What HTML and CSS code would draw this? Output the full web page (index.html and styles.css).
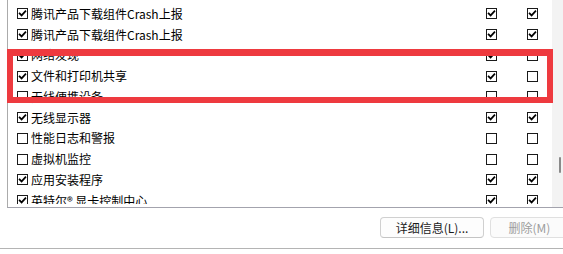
FILE: index.html
```html
<!DOCTYPE html>
<html lang="zh-CN">
<head>
<meta charset="utf-8">
<link rel="stylesheet" href="styles.css">
</head>
<body>
<div class="page">
  <div class="list">
    <div class="rows">
      <div class="row">
        <div class="label"><span class="cb on"><svg viewBox="0 0 9 9"><path d="M1.6 4.4 L3.6 6.4 L7.4 2.2"/></svg></span><span class="txt">腾讯产品下载组件Crash上报</span></div>
        <span class="cb on"><svg viewBox="0 0 9 9"><path d="M1.6 4.4 L3.6 6.4 L7.4 2.2"/></svg></span>
        <span class="cb on"><svg viewBox="0 0 9 9"><path d="M1.6 4.4 L3.6 6.4 L7.4 2.2"/></svg></span>
      </div>
      <div class="row">
        <div class="label"><span class="cb on"><svg viewBox="0 0 9 9"><path d="M1.6 4.4 L3.6 6.4 L7.4 2.2"/></svg></span><span class="txt">腾讯产品下载组件Crash上报</span></div>
        <span class="cb on"><svg viewBox="0 0 9 9"><path d="M1.6 4.4 L3.6 6.4 L7.4 2.2"/></svg></span>
        <span class="cb on"><svg viewBox="0 0 9 9"><path d="M1.6 4.4 L3.6 6.4 L7.4 2.2"/></svg></span>
      </div>
      <div class="row">
        <div class="label"><span class="cb on"><svg viewBox="0 0 9 9"><path d="M1.6 4.4 L3.6 6.4 L7.4 2.2"/></svg></span><span class="txt">网络发现</span></div>
        <span class="cb on"><svg viewBox="0 0 9 9"><path d="M1.6 4.4 L3.6 6.4 L7.4 2.2"/></svg></span>
        <span class="cb"></span>
      </div>
      <div class="row">
        <div class="label"><span class="cb on"><svg viewBox="0 0 9 9"><path d="M1.6 4.4 L3.6 6.4 L7.4 2.2"/></svg></span><span class="txt">文件和打印机共享</span></div>
        <span class="cb on"><svg viewBox="0 0 9 9"><path d="M1.6 4.4 L3.6 6.4 L7.4 2.2"/></svg></span>
        <span class="cb"></span>
      </div>
      <div class="row">
        <div class="label"><span class="cb"></span><span class="txt">无线便携设备</span></div>
        <span class="cb"></span>
        <span class="cb"></span>
      </div>
      <div class="row">
        <div class="label"><span class="cb on"><svg viewBox="0 0 9 9"><path d="M1.6 4.4 L3.6 6.4 L7.4 2.2"/></svg></span><span class="txt">无线显示器</span></div>
        <span class="cb on"><svg viewBox="0 0 9 9"><path d="M1.6 4.4 L3.6 6.4 L7.4 2.2"/></svg></span>
        <span class="cb on"><svg viewBox="0 0 9 9"><path d="M1.6 4.4 L3.6 6.4 L7.4 2.2"/></svg></span>
      </div>
      <div class="row">
        <div class="label"><span class="cb"></span><span class="txt">性能日志和警报</span></div>
        <span class="cb"></span>
        <span class="cb"></span>
      </div>
      <div class="row">
        <div class="label"><span class="cb"></span><span class="txt">虚拟机监控</span></div>
        <span class="cb"></span>
        <span class="cb"></span>
      </div>
      <div class="row">
        <div class="label"><span class="cb on"><svg viewBox="0 0 9 9"><path d="M1.6 4.4 L3.6 6.4 L7.4 2.2"/></svg></span><span class="txt">应用安装程序</span></div>
        <span class="cb on"><svg viewBox="0 0 9 9"><path d="M1.6 4.4 L3.6 6.4 L7.4 2.2"/></svg></span>
        <span class="cb on"><svg viewBox="0 0 9 9"><path d="M1.6 4.4 L3.6 6.4 L7.4 2.2"/></svg></span>
      </div>
      <div class="row">
        <div class="label"><span class="cb on"><svg viewBox="0 0 9 9"><path d="M1.6 4.4 L3.6 6.4 L7.4 2.2"/></svg></span><span class="txt">英特尔® 显卡控制中心</span></div>
        <span class="cb on"><svg viewBox="0 0 9 9"><path d="M1.6 4.4 L3.6 6.4 L7.4 2.2"/></svg></span>
        <span class="cb on"><svg viewBox="0 0 9 9"><path d="M1.6 4.4 L3.6 6.4 L7.4 2.2"/></svg></span>
      </div>
    </div>
    <div class="scrollbar"><div class="thumb"></div></div>
  </div>
  <div class="actions">
    <button class="btn">详细信息(L)...</button>
    <button class="btn btn-del" disabled>删除(M)</button>
  </div>
  <div class="divider"></div>
  <div class="highlight"></div>
</div>
</body>
</html>
```
FILE: styles.css
```css
html, body {
  margin: 0;
  padding: 0;
  background: #ffffff;
  overflow: hidden;
}
.page {
  position: relative;
  width: 563px;
  height: 254px;
  overflow: hidden;
  font-family: "Noto Sans CJK SC", "Noto Sans", sans-serif;
  font-size: 12px;
  color: #000;
}
.list {
  display: flex;
  height: 207px;
  margin-left: 7px;
  border-left: 1px solid #ababab;
  border-bottom: 1px solid #a3a3ad;
}
.rows {
  flex: 1;
  overflow: hidden;
  padding-top: 3.6px;
  margin-bottom: 3px;
}
.row {
  display: grid;
  grid-template-columns: 1fr 11px 11px;
  column-gap: 30px;
  align-items: center;
  height: 20.75px;
  padding-left: 9px;
  padding-right: 14px;
}
.label {
  display: flex;
  align-items: center;
  gap: 3px;
  white-space: nowrap;
}
.txt {
  line-height: 14px;
}
.cb {
  box-sizing: border-box;
  width: 11px;
  height: 11px;
  border: 1px solid #1a1a1a;
  background: #fff;
  display: block;
}
.cb svg {
  display: block;
  width: 9px;
  height: 9px;
}
.cb svg path {
  fill: none;
  stroke: #000;
  stroke-width: 1.7;
  stroke-linecap: square;
  stroke-linejoin: miter;
}
.scrollbar {
  width: 11px;
  background: #f3f3f3;
  display: flex;
  flex-direction: column;
  align-items: flex-end;
  padding-top: 157px;
  padding-right: 2px;
  box-sizing: border-box;
}
.thumb {
  width: 2px;
  height: 16px;
  background: #8a8a8a;
  border-radius: 1px;
}
.actions {
  display: flex;
  justify-content: flex-end;
  gap: 6px;
  margin-top: 9px;
  margin-right: -6px;
  height: 21px;
}
.btn {
  box-sizing: border-box;
  height: 21px;
  width: 104px;
  padding: 0;
  border: 1px solid #d0d0d0;
  border-bottom-color: #c4c4c4;
  border-radius: 4px;
  background: #fdfdfd;
  font-family: "Noto Sans CJK SC", "Noto Sans", sans-serif;
  font-size: 12px;
  color: #1b1b1b;
  line-height: 19px;
  flex: none;
}
.btn-del {
  width: 79px;
  color: #9d9d9d;
  border-color: #e0e0e0;
  background: #fbfbfb;
}
.divider {
  margin-top: 10px;
  height: 1px;
  background: #b4b4b4;
}
.highlight {
  position: absolute;
  left: 7px;
  top: 49px;
  width: 546px;
  height: 54px;
  box-sizing: border-box;
  border-style: solid;
  border-color: #ee3a3f;
  border-width: 7px 6px 6px 6px;
}
```
